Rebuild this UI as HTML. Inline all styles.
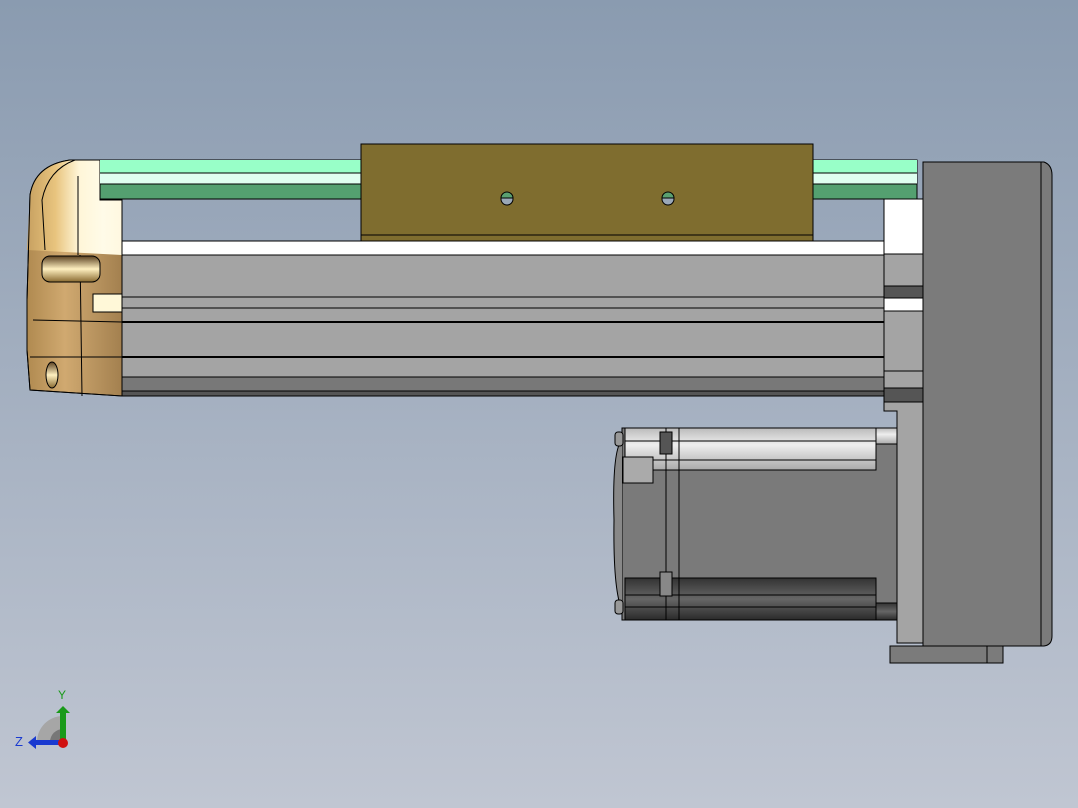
<!DOCTYPE html>
<html><head><style>html,body{margin:0;padding:0;width:1078px;height:808px;overflow:hidden}</style></head><body>
<svg width="1078" height="808" viewBox="0 0 1078 808" xmlns="http://www.w3.org/2000/svg">
<defs>
<linearGradient id="bg" x1="0" y1="0" x2="0" y2="1"><stop offset="0" stop-color="#8a9bb0"/><stop offset="1" stop-color="#c0c6d2"/></linearGradient>
<linearGradient id="tan" x1="0" y1="0" x2="1" y2="0"><stop offset="0" stop-color="#c7a060"/><stop offset="0.3" stop-color="#e8c47e"/><stop offset="0.55" stop-color="#fff6d8"/><stop offset="0.8" stop-color="#fffbe8"/><stop offset="1" stop-color="#fff8e0"/></linearGradient>
<linearGradient id="tan2" x1="0" y1="0" x2="1" y2="0"><stop offset="0" stop-color="#b08a50"/><stop offset="0.4" stop-color="#d0a970"/><stop offset="1" stop-color="#a3804f"/></linearGradient>
<linearGradient id="bar" x1="0" y1="0" x2="0" y2="1"><stop offset="0" stop-color="#bbb"/><stop offset="0.4" stop-color="#eee"/><stop offset="1" stop-color="#aaa"/></linearGradient>
<linearGradient id="dbar" x1="0" y1="0" x2="0" y2="1"><stop offset="0" stop-color="#333"/><stop offset="0.5" stop-color="#666"/><stop offset="1" stop-color="#2a2a2a"/></linearGradient>
<linearGradient id="slot" x1="0" y1="0" x2="0" y2="1"><stop offset="0" stop-color="#5a4020"/><stop offset="0.5" stop-color="#fff0c0"/><stop offset="1" stop-color="#8a6a30"/></linearGradient>
</defs>
<rect width="1078" height="808" fill="url(#bg)"/>
<g stroke="#000" stroke-width="1">
<!-- end cap -->
<path d="M100 160 L70 160 Q35 165 30 195 L27 300 L27 350 L30 390 L122 396 L122 200 L100 200 Z" fill="url(#tan2)"/>
<path d="M100 160 L70 160 Q35 165 30 195 L27 250 L122 255 L122 200 L100 200 Z" fill="url(#tan)" stroke="none"/>
<path d="M100 160 L70 160 Q35 165 30 195 L27 300 L27 350 L30 390 L122 396 L122 200 L100 200 Z" fill="none"/>
<path d="M75 160 Q48 170 42 200 L45 250 M78 176 L78 255 M33 320 L122 322 M30 357 L122 357 M80 255 L82 396" fill="none"/>
<rect x="42" y="256" width="58" height="26" rx="8" fill="url(#slot)"/>
<rect x="93" y="294" width="29" height="18" fill="#fff8d8"/>
<ellipse cx="52" cy="375" rx="6" ry="13" fill="url(#slot)"/>
<!-- rail -->
<rect x="100" y="160" width="817" height="39" fill="#54a070"/>
<rect x="100" y="160" width="817" height="13" fill="#98ffc8" stroke="none"/>
<rect x="100" y="173" width="817" height="11" fill="#dffff0" stroke="none"/>
<line x1="100" y1="173" x2="917" y2="173"/>
<line x1="100" y1="184" x2="917" y2="184"/>
<!-- white blocks -->
<rect x="884" y="199" width="39" height="55" fill="#fff"/>
<rect x="122" y="241" width="762" height="14" fill="#fff"/>
<!-- body -->
<rect x="122" y="255" width="762" height="122" fill="#a4a4a4"/>
<line x1="122" y1="297" x2="884" y2="297"/>
<line x1="122" y1="308" x2="884" y2="308"/>
<line x1="122" y1="322" x2="884" y2="322" stroke-width="2"/>
<line x1="122" y1="357" x2="884" y2="357" stroke-width="2"/>
<rect x="122" y="377" width="762" height="14" fill="#787878"/>
<rect x="122" y="391" width="762" height="5" fill="#555"/>
<!-- carriage -->
<rect x="361" y="144" width="452" height="97" fill="#7f6d2f"/>
<line x1="361" y1="235" x2="813" y2="235"/>
<!-- plate -->
<path d="M884 254 L923 254 L923 643 L897 643 L897 411 L884 411 Z" fill="#a4a4a4"/>
<rect x="884" y="286" width="39" height="25" fill="#fff"/>
<rect x="884" y="286" width="39" height="12" fill="#555"/>
<rect x="884" y="388" width="39" height="14" fill="#555"/>
<line x1="884" y1="371" x2="923" y2="371"/>
<!-- gearbox -->
<path d="M923 162 L1044 162 Q1052 165 1052 175 L1052 636 Q1052 645 1044 646 L923 646 Z" fill="#7b7b7b"/>
<line x1="1041" y1="162" x2="1041" y2="646"/>
<rect x="890" y="646" width="113" height="17" fill="#7b7b7b"/>
<line x1="987" y1="646" x2="987" y2="663"/>
<!-- motor -->
<rect x="622" y="428" width="275" height="192" fill="#7a7a7a"/>
<rect x="625" y="428" width="251" height="42" fill="url(#bar)"/>
<rect x="876" y="428" width="21" height="16" fill="url(#bar)"/>
<line x1="625" y1="441" x2="876" y2="441"/>
<line x1="625" y1="460" x2="876" y2="460"/>
<rect x="625" y="578" width="251" height="42" fill="url(#dbar)"/>
<rect x="876" y="603" width="21" height="17" fill="url(#dbar)"/>
<line x1="625" y1="595" x2="876" y2="595"/>
<line x1="625" y1="607" x2="876" y2="607"/>
<line x1="666" y1="428" x2="666" y2="620"/>
<line x1="679" y1="428" x2="679" y2="620"/>
<rect x="660" y="432" width="12" height="22" fill="#555"/>
<rect x="660" y="572" width="12" height="24" fill="#888"/>
<rect x="623" y="457" width="30" height="26" fill="#aaa"/>
<path d="M622 440 Q612 450 614 520 Q613 590 622 610" fill="#888"/>
<rect x="615" y="432" width="8" height="14" rx="3" fill="#999"/>
<rect x="615" y="600" width="8" height="14" rx="3" fill="#999"/>
</g>
<!-- holes -->
<g stroke="#000" stroke-width="1">
<circle cx="507" cy="199" r="6" fill="#9aa8b8"/>
<path d="M501 198 A6 6 0 0 1 513 198 Z" fill="#5aa070"/>
<circle cx="668" cy="199" r="6" fill="#9aa8b8"/>
<path d="M662 198 A6 6 0 0 1 674 198 Z" fill="#5aa070"/>
</g>
<!-- triad -->
<path d="M63 742 L37 742 A26 26 0 0 1 63 716 Z" fill="#a6a6a6"/>
<path d="M63 742 L50 742 A13 13 0 0 1 63 729 Z" fill="#777"/>
<rect x="60" y="712" width="6" height="30" fill="#1a9a1a"/>
<path d="M56 713 L63 706 L70 713 Z" fill="#1a9a1a"/>
<rect x="35" y="740" width="28" height="5" fill="#1a3ad0"/>
<path d="M36 736 L28 742.5 L36 749 Z" fill="#1a3ad0"/>
<circle cx="63" cy="743" r="5" fill="#d01010"/>
<text x="58" y="699" font-family="Liberation Sans, sans-serif" font-size="12" fill="#1a9a1a">Y</text>
<text x="15" y="746" font-family="Liberation Sans, sans-serif" font-size="13" fill="#1a3ad0">Z</text>
</svg>
</body></html>
